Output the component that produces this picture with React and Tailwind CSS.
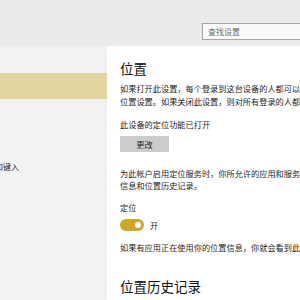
const font = { fontFamily: '"Noto Sans CJK SC", "Noto Sans", sans-serif' }

export default function App() {
  return (
    <div className="w-[300px] h-[300px] overflow-hidden flex flex-col bg-white text-[#1f1f1f]" style={font}>
      <div className="h-[46px] shrink-0 bg-[#ebebeb] flex items-start pt-[23px] overflow-hidden">
        <div className="ml-[202px] w-[120px] h-[17px] shrink-0 border border-[#a6a6a6] bg-[#fafafa] flex items-center pl-[5px]">
          <span className="text-[8px] leading-none text-[#6b6b6b]">查找设置</span>
        </div>
      </div>

      <div className="flex flex-1 min-h-0">
        <div className="w-[107px] shrink-0 bg-[#f2f2f2] pt-[27px] overflow-hidden">
          <div className="h-[26px] bg-[#e2d59f]" />
          <div className="mt-[61px] ml-[-5px] text-[8px] leading-[13px] whitespace-nowrap">和键入</div>
        </div>

        <div className="flex-1 min-w-0 pl-[13px] overflow-hidden whitespace-nowrap">
          <h2 className="mt-[12px] text-[13.5px] leading-[20px] font-normal text-[#111]">位置</h2>
          <p className="mt-[4px] text-[8.2px] leading-[13px]">
            如果打开此设置，每个登录到这台设备的人都可以更改自己的
            <br />
            位置设置。如果关闭此设置，则对所有登录的人都关闭位置。
          </p>
          <p className="mt-[10px] text-[8.2px] leading-[13px]">此设备的定位功能已打开</p>
          <button className="mt-[5px] w-[49px] h-[16px] bg-[#cccccc] text-[8.2px] leading-none flex items-center justify-center">
            更改
          </button>
          <p className="mt-[15px] text-[8.2px] leading-[12px]">
            为此帐户启用定位服务时，你所允许的应用和服务将能请求位置
            <br />
            信息和位置历史记录。
          </p>
          <p className="mt-[10px] text-[8.2px] leading-[13px]">定位</p>
          <div className="mt-[5px] flex items-center gap-[6px]">
            <div className="w-[24px] h-[12px] rounded-full bg-[#cfa62a] flex items-center justify-end pr-[3px]">
              <div className="w-[6px] h-[6px] rounded-full bg-white" />
            </div>
            <span className="text-[8.2px] leading-none">开</span>
          </div>
          <p className="mt-[10px] text-[8.2px] leading-[13px]">如果有应用正在使用你的位置信息，你就会看到此图标：</p>
          <h2 className="mt-[22px] text-[13.5px] leading-[20px] font-normal text-[#111]">位置历史记录</h2>
        </div>
      </div>
    </div>
  )
}
